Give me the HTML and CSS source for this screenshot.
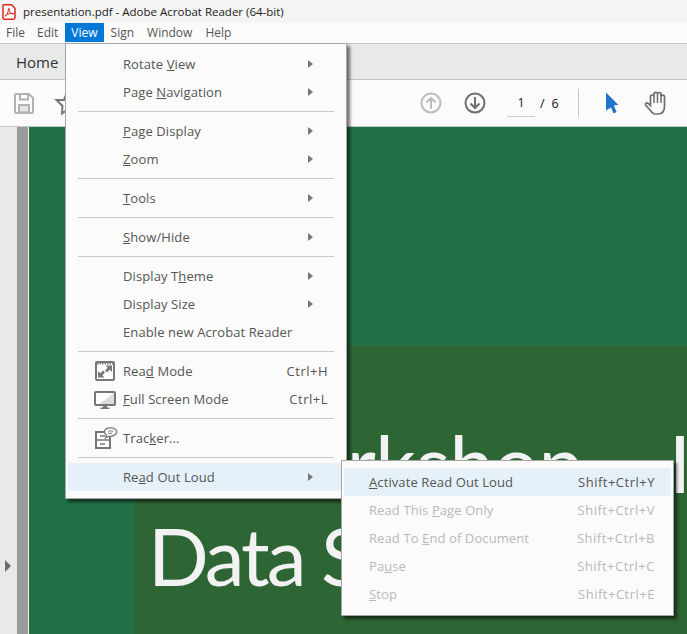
FILE: index.html
```html
<!DOCTYPE html>
<html lang="en">
<head>
    <title>presentation.pdf - Adobe Acrobat Reader (64-bit)</title>
    <meta charset="UTF-8">
    <link rel="stylesheet" href="styles.css">
</head>
<body>

    <div class="titlebar">
        <svg class="pdf-icon" width="14" height="16" viewBox="0 0 14 16">
            <path d="M1.5 .8H9.5L13 4.3V13.5Q13 15.2 11.3 15.2H2.7Q1 15.2 1 13.5V1.3Z" fill="#fff" stroke="#e0271c" stroke-width="1.5"/>
            <path d="M3.2 12.2C5 11 6.6 7.5 6.4 4.8 6.3 3.9 7.3 3.9 7.2 5 7 7.5 9 10 11.2 10.2 11.9 10.3 11.8 9.4 11 9.3 8.5 9.1 5.5 10 3.7 11.3 3 11.9 3 12.4 3.2 12.2Z" fill="none" stroke="#e0271c" stroke-width="1"/>
        </svg>
        <span>presentation.pdf - Adobe Acrobat Reader (64-bit)</span>
    </div>

    <div class="menubar">
        <span class="menubar-item file">File</span>
        <span class="menubar-item">Edit</span>
        <span class="menubar-item active">View</span>
        <span class="menubar-item">Sign</span>
        <span class="menubar-item">Window</span>
        <span class="menubar-item">Help</span>
    </div>

    <div class="tabbar"><span class="tab">Home</span></div>

    <div class="toolbar">
        <svg class="save-icon" width="20" height="21" viewBox="0 0 20 21">
            <path d="M1 2.5Q1 1 2.5 1H15L19 5V18.5Q19 20 17.500 20H2.500Q1 20 1 18.500Z" fill="none" stroke="#b2b2b2" stroke-width="2"/>
            <path d="M6 1.500V6.500H14V1.500" fill="none" stroke="#b2b2b2" stroke-width="2"/>
            <path d="M5 19.500V12H15V19.500Z" fill="#e2e2e2" stroke="#b2b2b2" stroke-width="2"/>
        </svg>
        <svg class="star-icon" width="24" height="24" viewBox="0 0 24 24">
            <path d="M14 1L17 8 24 9 19 15 20 22 14 19 9 22.500 9.500 15 3.500 9 11 9Z" fill="none" stroke="#777" stroke-width="2"/>
        </svg>

        <div class="spacer"></div>

        <svg class="page-btn" width="22" height="22" viewBox="0 0 22 22">
            <circle cx="11" cy="11" r="9.500" fill="none" stroke="#bcbcbc" stroke-width="2"/>
            <path d="M11 17V6M6.500 10.500L11 6 15.500 10.500" fill="none" stroke="#bcbcbc" stroke-width="2"/>
        </svg>
        <svg class="page-btn" width="22" height="22" viewBox="0 0 22 22">
            <circle cx="11" cy="11" r="9.500" fill="none" stroke="#6e6e6e" stroke-width="2"/>
            <path d="M11 5V16M6.500 11.500L11 16 15.500 11.500" fill="none" stroke="#6e6e6e" stroke-width="2"/>
        </svg>
        <span class="page-input">1</span>
        <span class="page-total">/&nbsp;&nbsp;6</span>
        <span class="tool-sep"></span>
        <svg class="cursor-icon" width="14" height="22" viewBox="0 0 14 22">
            <path d="M1 .500L13.500 13 8.800 13.300 11.500 20 8.500 21.500 6 15.500 1 18.500Z" fill="#1f74cc"/>
        </svg>
        <svg class="hand-icon" width="24" height="24" viewBox="0 0 24 24">
            <path d="M6 19L1.800 14.200C.8 12.800 2.800 11 4.200 12.400L6.500 14.500V5.500C6.500 3.500 10 3.500 10 5.500V3C10 .8 13.500 .8 13.500 3V3C13.500 1 17 1 17 3V5.500C17 3.700 20.500 3.700 20.500 5.500V15C20.500 20 18 23 14 23H11C9 23 7.500 21 6 19Z" fill="none" stroke="#6e6e6e" stroke-width="1.700"/>
            <path d="M10 5V12M13.500 3V12M17 3V12" fill="none" stroke="#6e6e6e" stroke-width="1.500"/>
        </svg>
    </div>

    <div class="viewer">
        <div class="rail"><span class="rail-arrow"></span></div>
        <div class="gutter"></div>
        <div class="page">
            <div class="panel">
                <div class="slide-line first">Workshop – Introduction to</div>
                <div class="slide-line">Data Science</div>
            </div>
        </div>
    </div>

    <div class="menu view-menu">
        <div class="item"><span class="label">Rotate <u>V</u>iew</span><span class="arrow"></span></div>
        <div class="item"><span class="label">Page <u>N</u>avigation</span><span class="arrow"></span></div>
        <div class="sep"></div>
        <div class="item"><span class="label"><u>P</u>age Display</span><span class="arrow"></span></div>
        <div class="item"><span class="label"><u>Z</u>oom</span><span class="arrow"></span></div>
        <div class="sep"></div>
        <div class="item"><span class="label"><u>T</u>ools</span><span class="arrow"></span></div>
        <div class="sep"></div>
        <div class="item"><span class="label"><u>S</u>how/Hide</span><span class="arrow"></span></div>
        <div class="sep"></div>
        <div class="item"><span class="label">Display T<u>h</u>eme</span><span class="arrow"></span></div>
        <div class="item"><span class="label">Display Size</span><span class="arrow"></span></div>
        <div class="item"><span class="label">Enable new Acrobat Reader</span></div>
        <div class="sep"></div>
        <div class="item">
            <svg class="item-icon" width="24" height="22" viewBox="0 0 24 22">
                <rect x="2" y="2" width="18" height="18" rx="1" fill="#fff" stroke="#777" stroke-width="2"/>
                <path d="M3 3.500H19" stroke="#777" stroke-width="2" stroke-dasharray="1.500 1"/>
                <path d="M18 5.500V12L15.800 9.800 13 12.500 11 10.500 13.700 7.700 11.500 5.500ZM4 17.500V11L6.200 13.200 9 10.500 11 12.500 8.300 15.300 10.500 17.500Z" fill="#777"/>
            </svg>
            <span class="label">Rea<u>d</u> Mode</span><span class="shortcut">Ctrl+H</span>
        </div>
        <div class="item">
            <svg class="item-icon" width="24" height="22" viewBox="0 0 24 22">
                <rect x="1" y="4" width="20" height="13" rx="1" fill="#fff" stroke="#777" stroke-width="2"/>
                <path d="M20 5V16H5Z" fill="#dcdcdc"/>
                <path d="M9 17.500H13V19.500H15.500V21H6.500V19.500H9Z" fill="#777"/>
            </svg>
            <span class="label"><u>F</u>ull Screen Mode</span><span class="shortcut">Ctrl+L</span>
        </div>
        <div class="sep"></div>
        <div class="item">
            <svg class="item-icon" width="24" height="24" viewBox="0 0 24 24">
                <path d="M2 5H16V21H2Z" fill="#fff" stroke="#777" stroke-width="2"/>
                <path d="M2 13H16" stroke="#777" stroke-width="1.500"/>
                <path d="M6 9H11M6 17H11" stroke="#777" stroke-width="1.500"/>
                <path d="M16.500 .800C13 .800 10.500 2.500 10.500 5 10.500 6.500 11.500 7.700 12.500 8.300L11.500 11 14.800 9.200C18.500 9.700 22.800 8 22.800 5 22.800 2.500 20 .800 16.500 .800Z" fill="#fff" stroke="#777" stroke-width="1.300"/>
                <path d="M14 4H19.500M14 6.300H18" stroke="#777" stroke-width="1"/>
            </svg>
            <span class="label">Trac<u>k</u>er...</span>
        </div>
        <div class="sep"></div>
        <div class="item hover"><span class="label">Re<u>a</u>d Out Loud</span><span class="arrow"></span></div>
    </div>

    <div class="menu read-menu">
        <div class="item hover"><span class="label"><u>A</u>ctivate Read Out Loud</span><span class="shortcut">Shift+Ctrl+Y</span></div>
        <div class="item disabled"><span class="label">Read This <u>P</u>age Only</span><span class="shortcut">Shift+Ctrl+V</span></div>
        <div class="item disabled"><span class="label">Read To <u>E</u>nd of Document</span><span class="shortcut">Shift+Ctrl+B</span></div>
        <div class="item disabled"><span class="label">Pa<u>u</u>se</span><span class="shortcut">Shift+Ctrl+C</span></div>
        <div class="item disabled"><span class="label"><u>S</u>top</span><span class="shortcut">Shift+Ctrl+E</span></div>
    </div>

</body>
</html>
```

FILE: styles.css
```css
* {
    box-sizing: border-box;
}

html, body {
    height: 100%;
}

body {
    margin: 0;
    overflow: hidden;
    position: relative;
    font-family: 'Open Sans', 'Noto Sans', sans-serif;
    font-size: 13px;
    letter-spacing: .1px;
    color: #555;
    background: #e9e9e9;
}

.titlebar {
    height: 23px;
    display: flex;
    align-items: center;
    padding-left: 2px;
    background: #f4f4f4;
    color: #1a1a1a;
    font-size: 11.5px;
    letter-spacing: 0;
}

.pdf-icon {
    margin-right: 7px;
}

.menubar {
    height: 20px;
    display: flex;
    background: #fbfbfb;
    font-size: 12px;
    letter-spacing: 0;
}

.menubar-item {
    display: flex;
    align-items: center;
    padding: 0 6px;
    height: 19px;
    margin-right: 1px;
}

.menubar-item.file {
    padding-right: 5px;
}

.menubar-item.active {
    background: #0078d7;
    color: #fff;
}

.tabbar {
    height: 37px;
    display: flex;
    align-items: center;
    padding-left: 16px;
    background: #e9e9e9;
    border-top: 1px solid #c6c6c6;
    border-bottom: 1px solid #c6c6c6;
}

.tab {
    font-size: 15px;
    letter-spacing: 0;
    color: #333;
}

.toolbar {
    height: 47px;
    display: flex;
    align-items: center;
    padding: 0 19px 0 14px;
    background: #fbfbfb;
    border-bottom: 1px solid #c6c6c6;
}

.star-icon {
    margin-left: 19px;
}

.spacer {
    flex: 1;
}

.page-btn {
    margin-right: 22px;
}

.page-input {
    width: 28px;
    height: 28px;
    margin: 0 5px 0 -1px;
    padding-top: 5px;
    text-align: center;
    font-size: 12.5px;
    color: #222;
    border-bottom: 1px solid #ccc;
}

.page-total {
    width: 38px;
    font-size: 12.5px;
    color: #111;
}

.tool-sep {
    width: 1px;
    height: 28px;
    margin-right: 26px;
    background: #c6c6c6;
}

.cursor-icon {
    margin-right: 25px;
}

.viewer {
    height: 507px;
    display: flex;
}

.rail {
    width: 17px;
    display: flex;
    align-items: center;
    padding: 370px 0 0 5px;
}

.rail-arrow {
    border-left: 6px solid #6e6e6e;
    border-top: 6px solid transparent;
    border-bottom: 6px solid transparent;
}

.gutter {
    width: 12px;
    background: #9b9b9b;
    border-right: 1px solid #f4f4f4;
}

.page {
    flex: 1;
    padding: 219px 0 0 106px;
    background: #217046;
    overflow: hidden;
}

.panel {
    height: 100%;
    padding: 70px 0 0 13px;
    background: #2d6535;
    color: #f2f2f2;
    font-family: Lato, sans-serif;
    font-size: 80px;
    letter-spacing: -3px;
    line-height: 93px;
    white-space: nowrap;
}

.slide-line.first {
    padding-left: 76px;
    letter-spacing: -.5px;
}

.menu {
    position: absolute;
    background: #fbfbfb;
    border: 1px solid #a6a6a6;
    box-shadow: 3px 3px 3px rgba(0, 0, 0, .55);
}

.view-menu {
    left: 65px;
    top: 43px;
    width: 282px;
    height: 456px;
    padding: 6px 0;
}

.read-menu {
    left: 341px;
    top: 460px;
    width: 333px;
    height: 156px;
    padding: 7px 0;
}

.item {
    height: 28px;
    margin: 0 2px;
    display: flex;
    align-items: center;
    position: relative;
    padding: 0 16px 0 55px;
}

.read-menu .item {
    padding-left: 25px;
}

.item.hover {
    background: #e5f0f9;
}

.item.disabled {
    color: #b9b9b9;
}

.item-icon {
    position: absolute;
    left: 26px;
    top: 3px;
}

.label {
    flex: 1;
}

.shortcut {
    letter-spacing: .5px;
}

.arrow {
    margin-right: 15px;
    border-left: 5px solid #777;
    border-top: 4px solid transparent;
    border-bottom: 4px solid transparent;
}

.sep {
    height: 1px;
    margin: 5px 12px;
    background: #c9c9c9;
}
```
